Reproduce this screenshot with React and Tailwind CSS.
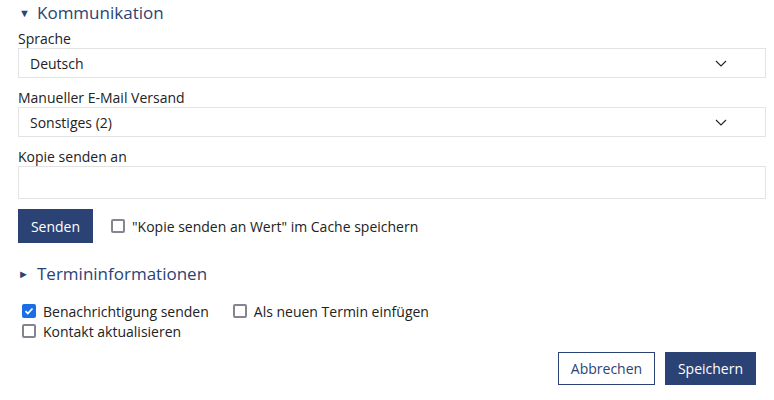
import React from 'react';

const Chevron = () => (
  <svg width="12" height="7" viewBox="0 0 12 7" fill="none" className="text-[#222]">
    <path d="M1 1l5 5 5-5" stroke="currentColor" strokeWidth="1.1" />
  </svg>
);

const Checkbox = ({ checked = false }) =>
  checked ? (
    <span className="flex h-[14px] w-[14px] items-center justify-center rounded-[2px] bg-[#1a6ee6]">
      <svg width="10" height="10" viewBox="0 0 10 10" fill="none">
        <path d="M1.5 5.2l2.3 2.3 4.7-5" stroke="white" strokeWidth="1.8" />
      </svg>
    </span>
  ) : (
    <span className="h-[14px] w-[14px] rounded-[2px] border-2 border-[#85858f] bg-white" />
  );

const Select = ({ value }) => (
  <div className="flex h-[30px] items-center justify-between border border-[#e3e3e3] pl-[11px] pr-[38px] text-[14px] text-[#222]">
    <span>{value}</span>
    <Chevron />
  </div>
);

const Label = ({ children, className = '' }) => (
  <div className={`flex h-[19px] items-center text-[14px] text-[#222] ${className}`}>{children}</div>
);

export default function App() {
  return (
    <div
      className="w-[774px] h-[400px] bg-white pl-[18px] pr-[8px] overflow-hidden"
      style={{ fontFamily: '"Open Sans", "Noto Sans", sans-serif' }}
    >
      <div className="flex h-[26px] items-center text-[17px] text-[#2b4374]">
        <span className="ml-[1px] w-[18px] text-[11px]">▼</span>
        <span>Kommunikation</span>
      </div>

      <Label className="mt-[3px]">Sprache</Label>
      <Select value="Deutsch" />

      <Label className="mt-[10px]">Manueller E-Mail Versand</Label>
      <Select value="Sonstiges (2)" />

      <Label className="mt-[10px]">Kopie senden an</Label>
      <div className="h-[33px] border border-[#e3e3e3]" />

      <div className="mt-[10px] flex items-center">
        <button className="h-[34px] w-[75px] bg-[#2b4374] text-[14px] text-white">Senden</button>
        <label className="ml-[18px] flex items-center gap-[7px] text-[14px] text-[#222]">
          <Checkbox />
          <span>"Kopie senden an Wert" im Cache speichern</span>
        </label>
      </div>

      <div className="mt-[18px] flex h-[26px] items-center text-[17px] text-[#2b4374]">
        <span className="w-[19px] text-[11px]">►</span>
        <span>Termininformationen</span>
      </div>

      <div className="mt-[14px] pl-[4px] text-[14px] text-[#222]">
        <div className="flex h-[20px] items-center">
          <label className="flex items-center gap-[7px]">
            <Checkbox checked />
            <span>Benachrichtigung senden</span>
          </label>
          <label className="ml-[24px] flex items-center gap-[7px]">
            <Checkbox />
            <span>Als neuen Termin einfügen</span>
          </label>
        </div>
        <div className="flex h-[20px] items-center">
          <label className="flex items-center gap-[7px]">
            <Checkbox />
            <span>Kontakt aktualisieren</span>
          </label>
        </div>
      </div>

      <div className="mt-[11px] mr-[10px] flex justify-end gap-[10px]">
        <button className="h-[33px] w-[97px] border border-[#2b4374] bg-white text-[14px] text-[#2b4374]">
          Abbrechen
        </button>
        <button className="h-[33px] w-[91px] bg-[#2b4374] text-[14px] text-white">Speichern</button>
      </div>
    </div>
  );
}
